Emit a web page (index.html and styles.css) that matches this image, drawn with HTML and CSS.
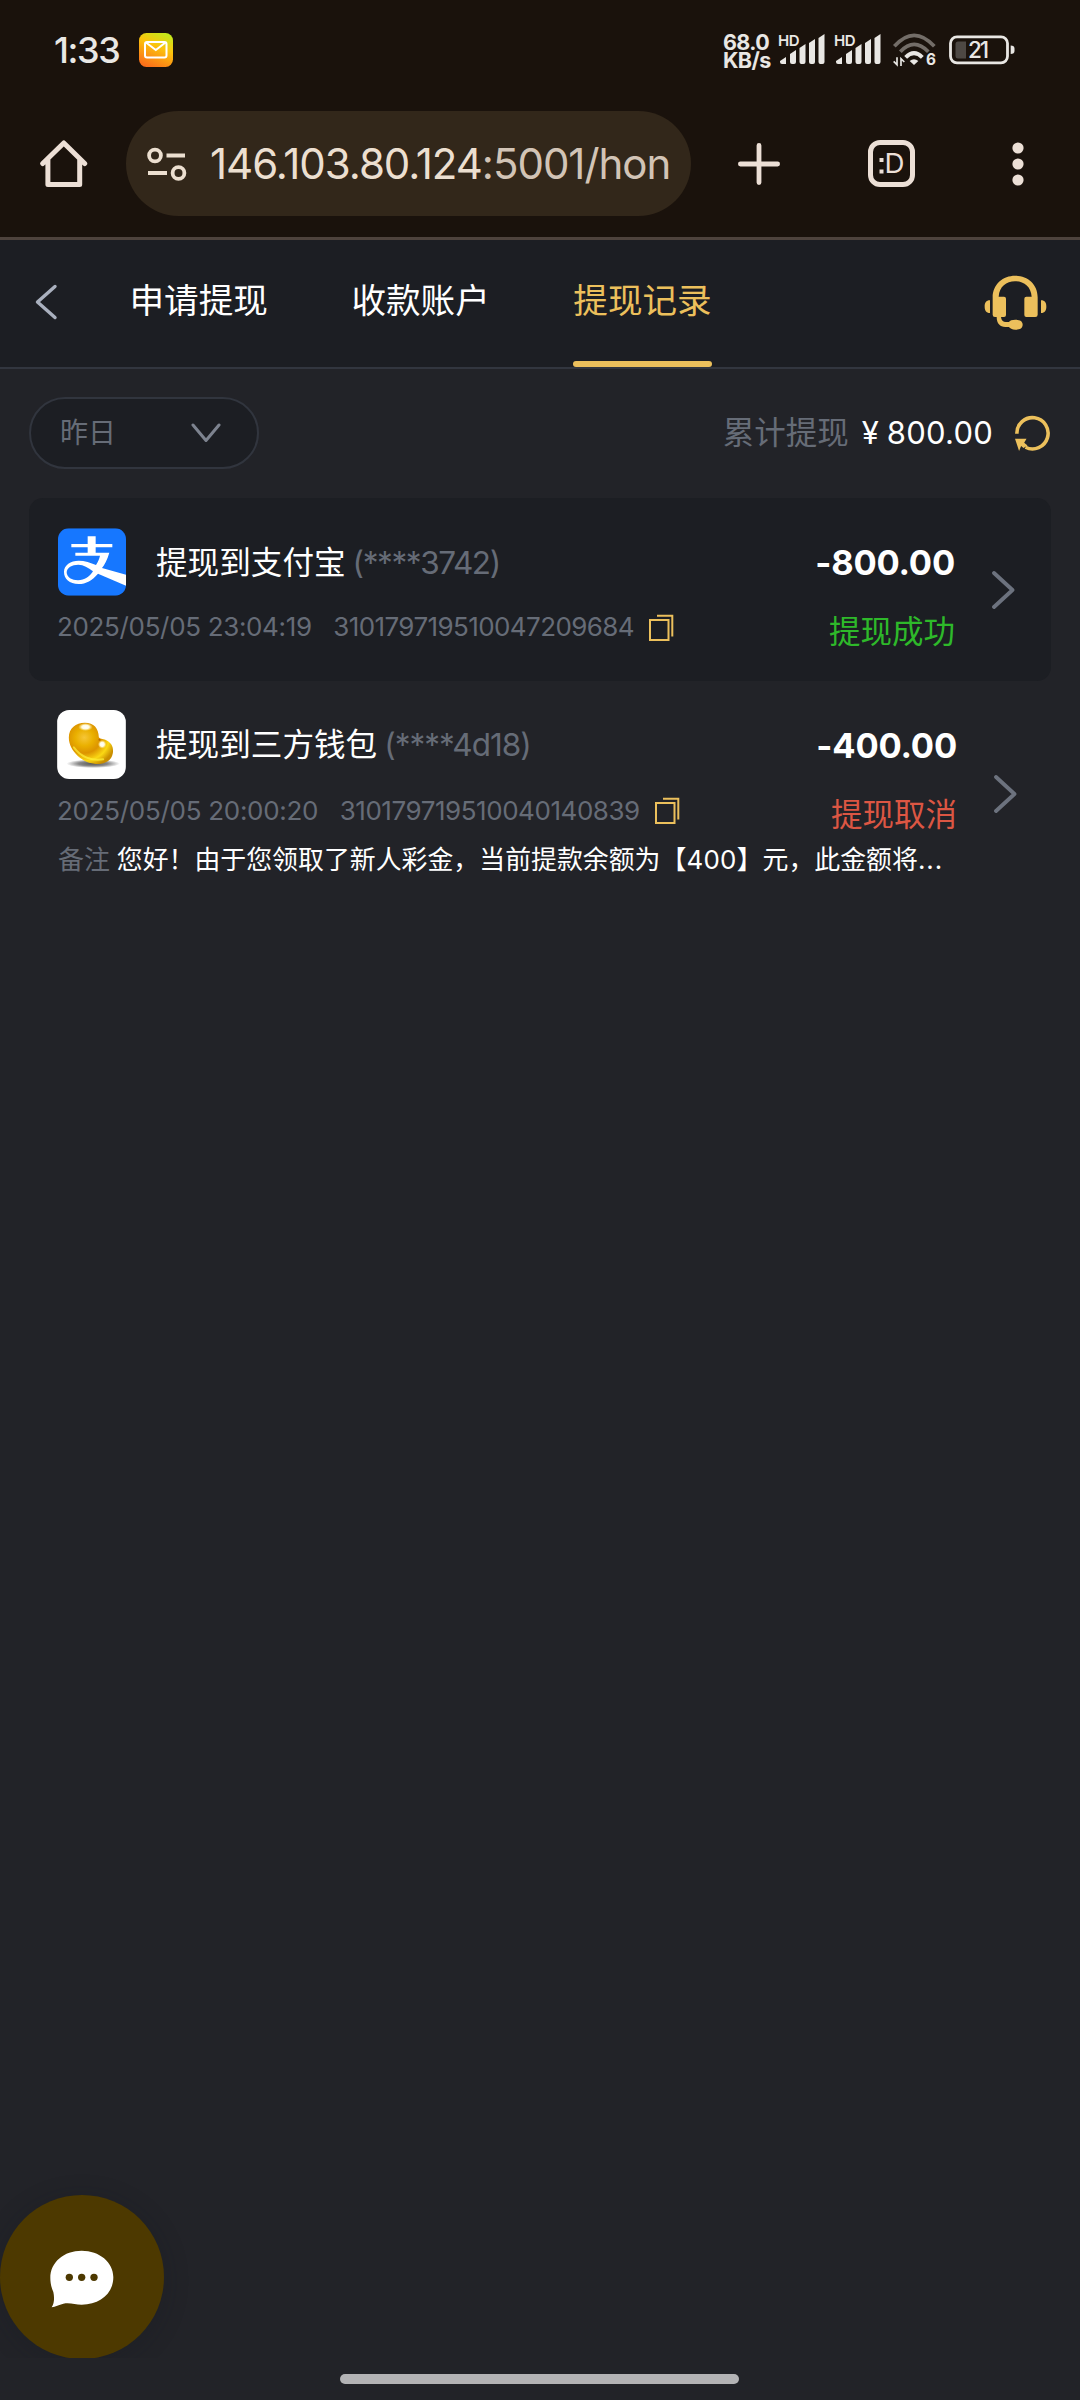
FILE: index.html
```
<!DOCTYPE html>
<html lang="zh-CN">
<head>
<meta charset="utf-8">
<title>提现记录</title>
<link rel="stylesheet" href="styles.css">
</head>
<body>
<div class="screen">
  <div class="statusbar">
    <span class="clock">1:33</span>
    <svg class="mail" width="34" height="34" viewBox="0 0 34 34">
      <defs><linearGradient id="mailbg" x1=".75" y1="0" x2=".3" y2="1"><stop offset="0" stop-color="#c4ea1c"/><stop offset=".4" stop-color="#fcc30c"/><stop offset="1" stop-color="#fb6f1a"/></linearGradient></defs>
      <rect width="34" height="34" rx="7.500" fill="url(#mailbg)"/>
      <rect x="6" y="9" width="21.500" height="15.500" rx="2" fill="none" stroke="#fff" stroke-width="2"/>
      <path d="M7 9.500 L16.800 17 L26.500 9.500" fill="none" stroke="#fff" stroke-width="2"/>
    </svg>
    <div class="indicators">
      <div class="speed"><span>68.0</span><span>KB/s</span></div>
      <svg class="signal" width="48" height="36" viewBox="0 -2 48 36">
        <text x="0" y="13" font-size="15" font-weight="600" textLength="21.500" fill="#e9e7e4">HD</text>
        <path fill="#e9e7e4" d="M2 28l6-4v7H4q-2 0-2-2zM12 21l6-4v12q0 2-2 2h-2q-2 0-2-2zM21.500 15l6-4v18q0 2-2 2h-2q-2 0-2-2zM31 10l6-4v23q0 2-2 2h-2q-2 0-2-2zM40.500 5l6-4v28q0 2-2 2h-2q-2 0-2-2z"/>
      </svg>
      <svg class="signal" width="48" height="36" viewBox="0 -2 48 36">
        <text x="0" y="13" font-size="15" font-weight="600" textLength="21.500" fill="#e9e7e4">HD</text>
        <path fill="#e9e7e4" d="M2 28l6-4v7H4q-2 0-2-2zM12 21l6-4v12q0 2-2 2h-2q-2 0-2-2zM21.500 15l6-4v18q0 2-2 2h-2q-2 0-2-2zM31 10l6-4v23q0 2-2 2h-2q-2 0-2-2zM40.500 5l6-4v28q0 2-2 2h-2q-2 0-2-2z"/>
      </svg>
      <svg class="wifi" width="46" height="38" viewBox="0 0 138 114">
        <g fill="none" stroke-width="11" transform="translate(-32 -25)">
          <path stroke="#736d68" d="M39 65Q98 -1 159 65M57 81Q98 37 141 81"/>
          <path stroke="#e9e7e4" stroke-width="12" d="M73 98Q98 73 123 98"/>
          <path stroke="#e9e7e4" stroke-width="5" d="M47 98v22l-10-10M59 124v-22l10 10"/>
          <path fill="#e9e7e4" d="M85 109Q98 98 111 109L98 121Z"/>
        </g>
        <text x="102" y="97" font-size="46" font-weight="700" fill="#e9e7e4">6</text>
      </svg>
      <svg class="battery" width="67" height="30" viewBox="0 0 67 30">
        <rect x="1.500" y="1.800" width="57" height="26" rx="6.500" fill="none" stroke="#e9e7e4" stroke-width="2.800"/>
        <path fill="#4d4844" d="M9 6.500h8v17H9q-2.500 0-2.500-2.500V9q0-2.500 2.500-2.500z"/>
        <path fill="#e9e7e4" d="M61.700 10.500q3.800 0 3.800 3v2.500q0 3-3.800 3z"/>
        <text x="19" y="23" font-size="22.500" font-weight="500" textLength="21" fill="#e9e7e4">21</text>
      </svg>
    </div>
  </div>

  <div class="browserbar">
    <svg class="home" width="48" height="48" viewBox="0 0 48 48" fill="none" stroke="#ecdfd6" stroke-width="5" stroke-linecap="round" stroke-linejoin="round">
      <path d="M2.700 23.500L23.800 3L44.700 23.500M7.900 19.500V44.500H39.700V19.500"/>
    </svg>
    <div class="omnibox">
      <svg width="40" height="34" viewBox="0 0 40 34" fill="none" stroke="#ecdfd0" stroke-width="3.800">
        <circle cx="8" cy="8.500" r="5.900"/><path d="M19.500 8.500H38M1 26H20"/><circle cx="31.500" cy="26" r="5.900"/>
      </svg>
      <span class="url">146.103.80.124<span class="path">:5001/hon</span></span>
    </div>
    <svg class="plus" width="44" height="44" viewBox="0 0 44 44" stroke="#ecdfd6" stroke-width="4.800" stroke-linecap="round"><path d="M22 3.400V40.600M3.400 22H40.600"/></svg>
    <svg class="tabcount" width="48" height="48" viewBox="0 0 48 48">
      <rect x="2.500" y="2.500" width="42" height="42" rx="9.500" fill="none" stroke="#ecdfd6" stroke-width="5"/>
      <path fill="#ecdfd6" d="M11.500 18h4v4h-4zM11.500 29.500h4v4h-4z"/>
      <text x="16.600" y="33.300" font-size="27" fill="#ecdfd6" textLength="20" lengthAdjust="spacingAndGlyphs">D</text>
    </svg>
    <svg class="more" width="12" height="44" viewBox="0 0 12 44" fill="#ecdfd6"><circle cx="6" cy="6" r="5.600"/><circle cx="6" cy="22" r="5.600"/><circle cx="6" cy="38" r="5.600"/></svg>
  </div>

  <header class="topnav">
    <svg class="back" width="24" height="36" viewBox="0 0 24 36" fill="none" stroke="#a9b0be" stroke-width="3.400" stroke-linecap="round" stroke-linejoin="round"><path d="M20 2.500L2.500 18L20 33.500"/></svg>
    <nav class="tabs">
      <span class="tab">申请提现</span>
      <span class="tab">收款账户</span>
      <span class="tab active">提现记录</span>
    </nav>
    <svg class="support" width="64" height="56" viewBox="10 15 192 168" fill="#ecc05c">
      <path d="M36 82C36 42 68 17 103 17C140 17 171 42 171 82V134Q171 141 164 141H137Q131 141 131 135V86Q131 80 137 80H153C151 50 130 34 103 34C77 34 56 50 54 80H70Q76 80 76 86V135Q76 141 70 141H61C62 151 67 156 76 156H85C88 151 94 149 104 149C118 149 126 154 126 164C126 174 118 179 104 179C94 179 88 175 85 171H74C58 171 48 160 48 141H43Q36 141 36 134Z"/>
      <path d="M28 91V129C16 129 12 121 12 110S16 91 28 91ZM181 91V129C193 129 197 121 197 110S193 91 181 91Z"/>
    </svg>
  </header>

  <main class="content">
    <section class="filters">
      <div class="select">
        <span>昨日</span>
        <svg width="30" height="20" viewBox="0 0 30 20" fill="none" stroke="#7d838f" stroke-width="3" stroke-linecap="round" stroke-linejoin="round"><path d="M2 2L15 17.500L28 2"/></svg>
      </div>
      <div class="total">
        <span class="label">累计提现</span>
        <span class="yen">¥</span>
        <span class="sum">800.00</span>
        <svg width="36" height="36" viewBox="107 437 106 106"><path d="M112.500 492A46 46 0 1 1 138 532" fill="none" stroke="#ecc05c" stroke-width="10.500"/><path fill="#ecc05c" d="M107 507H141L134 519L144 527L132 534L125 528L119 543Z"/></svg>
      </div>
    </section>

    <section class="records">
      <article class="record striped">
        <div class="title">
          <svg class="logo" width="68" height="68" viewBox="24 24 204 202">
            <defs><clipPath id="tile"><rect x="24" y="24" width="204" height="202" rx="32"/></clipPath></defs>
            <g clip-path="url(#tile)"><path fill="#1677ff" d="M24 24h204v202H24z"/>
            <path fill="#fff" d="M64 71H113V48H137V71H187V81H137V97H178C172 118 163 134 156 143L228 163V196L144 160C127 180 108 191 86 191C58 191 42 175 42 155C42 134 62 121 86 121C104 121 122 127 138 134C143 126 148 116 150 106H76V97H113V81H64Z"/>
            <path fill="#1677ff" d="M129 153C114 142 101 133 85 133C66 133 50 142 50 156C50 171 66 180 84 180C104 180 118 169 129 153Z"/></g>
          </svg>
          <span class="name">提现到支付宝</span><span class="acct acct-a">(****3742)</span>
        </div>
        <div class="amount">-800.00</div>
        <div class="meta">
          <span class="date">2025/05/05 23:04:19</span><span class="order">310179719510047209684</span>
          <svg width="25" height="27" viewBox="0 0 25 27" fill="none" stroke="#ecc05c" stroke-width="2"><rect x="1" y="6" width="18.500" height="20"/><path d="M8 1.700H23.300V22.500"/></svg>
        </div>
        <div class="status ok">提现成功</div>
        <svg class="chev" width="23" height="38" viewBox="0 0 23 38"><path d="M2 2L20.500 19L2 36"/></svg>
      </article>

      <article class="record noted">
        <div class="title">
          <svg class="logo" width="69" height="69" viewBox="22 570 206 207">
            <defs>
              <radialGradient id="gold" cx=".35" cy=".36" r=".72"><stop offset="0" stop-color="#f6c637"/><stop offset=".28" stop-color="#eab000"/><stop offset=".52" stop-color="#dc9300"/><stop offset=".78" stop-color="#fbd814"/><stop offset="1" stop-color="#c98e00"/></radialGradient>
              <radialGradient id="shade"><stop offset="0" stop-color="#555"/><stop offset=".55" stop-color="#8a8a8a"/><stop offset="1" stop-color="#fff"/></radialGradient>
              <radialGradient id="shine"><stop offset="0" stop-color="#fff"/><stop offset=".5" stop-color="#fffbe0"/><stop offset="1" stop-color="#ffe680" stop-opacity="0"/></radialGradient>
            </defs>
            <rect x="22" y="570" width="206" height="207" rx="36" fill="#fff"/>
            <ellipse cx="130" cy="731" rx="80" ry="13" fill="url(#shade)"/>
            <path fill="url(#gold)" d="M57 653C57 624 78 608 105 608C132 608 146 624 147 652C152 659 162 656 172 662C184 669 192 680 189 700C185 724 163 733 138 732C98 729 57 692 57 653Z"/>
            <path fill="none" stroke="#fff23c" stroke-width="6" stroke-linecap="round" opacity=".7" d="M72 682C92 710 125 724 160 718"/>
            <ellipse cx="107" cy="621" rx="22" ry="12" fill="url(#shine)"/>
            <ellipse cx="157" cy="673" rx="13" ry="13" fill="url(#shine)"/>
            <circle cx="149" cy="659" r="3" fill="#b86a00"/>
          </svg>
          <span class="name">提现到三方钱包</span><span class="acct acct-b">(****4d18)</span>
        </div>
        <div class="amount">-400.00</div>
        <div class="meta">
          <span class="date">2025/05/05 20:00:20</span><span class="order">310179719510040140839</span>
          <svg width="25" height="27" viewBox="0 0 25 27" fill="none" stroke="#ecc05c" stroke-width="2"><rect x="1" y="6" width="18.500" height="20"/><path d="M8 1.700H23.300V22.500"/></svg>
        </div>
        <div class="status cancelled">提现取消</div>
        <div class="note"><span class="label">备注</span><span>您好！由于您领取了新人彩金，当前提款余额为【<span class="num">400</span>】元，此金额将<span class="dots">...</span></span></div>
        <svg class="chev" width="23" height="38" viewBox="0 0 23 38"><path d="M2 2L20.500 19L2 36"/></svg>
      </article>
    </section>
  </main>

  <div class="chat">
    <div class="bubble">
      <svg width="64" height="58" viewBox="0 0 192 174">
        <path fill="#fff" d="M95 2C148 2 190 36 190 82C190 130 150 164 95 164C75 164 60 157 40 161C27 164 16 170 5 172C14 157 13 140 10 126C4 113 1 99 1 84C1 36 42 2 95 2Z"/>
        <g fill="#4d3900"><circle cx="58" cy="82" r="11"/><circle cx="95" cy="82" r="11"/><circle cx="132" cy="82" r="11"/></g>
      </svg>
    </div>
  </div>
  <div class="gesture"></div>
</div>
</body>
</html>
```
FILE: styles.css
```
* { box-sizing: border-box; }
body { margin: 0; background: #222328; }
svg { display: block; flex: none; }

.screen {
  position: relative;
  width: 1080px;
  height: 2400px;
  overflow: hidden;
  background: #222328;
  color: #fff;
  font-family: Inter, "Noto Sans CJK SC", sans-serif;
  white-space: nowrap;
}

/* phone status bar */
.statusbar {
  display: flex;
  align-items: center;
  height: 100px;
  padding: 0 64px 0 54px;
  background: #1a120c;
  color: #e9e7e4;
}
.clock { width: 85px; font-size: 36px; font-weight: 500; letter-spacing: -1.4px; }
.indicators { display: flex; align-items: center; margin-left: auto; }
.speed {
  display: flex;
  flex-direction: column;
  width: 55px;
  padding-top: 2px;
  font-size: 21.500px;
  font-weight: 700;
  line-height: 18.500px;
  letter-spacing: -.6px;
}
.signal { margin: 0 8px 2px 0; }
.wifi { margin: 4px 11px 0 2px; }

/* browser toolbar */
.browserbar {
  display: flex;
  align-items: center;
  height: 140px;
  padding: 0 0 10px 40px;
  background: #1a120c;
  border-bottom: 3px solid #4e433d;
}
.omnibox {
  display: flex;
  align-items: center;
  width: 565px;
  height: 105px;
  margin-left: 38px;
  padding: 0 21px;
  border-radius: 53px;
  background: #32271a;
}
.url {
  width: 460px;
  margin-left: 23px;
  overflow: hidden;
  color: #ecdfd0;
  font-size: 42px;
  line-height: 60px;
  letter-spacing: -1.02px;
}
.path { color: #d2c4b6; }
.plus { margin-left: 46px; }
.tabcount { margin-left: 87px; }
.more { margin-left: 96px; }

/* page header */
.topnav {
  display: flex;
  align-items: center;
  height: 129px;
  padding: 0 32.500px 0 35px;
  background: #1c1e23;
  border-bottom: 2px solid #32363f;
}
.back { margin-top: -4px; }
.tabs { display: flex; gap: 83.600px; height: 100%; margin-left: 70.500px; }
.tab { height: 127px; font-size: 34.600px; line-height: 120px; }
.tab.active { color: #ecc05c; }
.tab.active::after {
  content: "";
  display: block;
  height: 6px;
  margin-top: 1px;
  border-radius: 3px;
  background: #ecc05c;
}
.support { margin: 0 0 2px auto; }

.filters {
  display: flex;
  align-items: center;
  justify-content: space-between;
  padding: 28px 29px 29px 29px;
}
.select {
  display: flex;
  align-items: center;
  justify-content: space-between;
  width: 230px;
  height: 72px;
  padding: 0 36px 0 29px;
  border: 2px solid #31353e;
  border-radius: 36px;
  background: #1c1e23;
  color: #666c77;
  font-size: 28px;
  line-height: 38px;
}
.total { display: flex; align-items: center; line-height: 40px; }
.total .label { color: #666c77; font-size: 31.500px; }
.yen { width: 19px; margin-left: 13px; font-size: 31px; }
.sum { margin: 0 22px 0 6px; font-size: 31px; letter-spacing: .25px; }

/* withdrawal records */
.records { padding: 0 29px; }
.record {
  display: grid;
  grid-template-columns: 1fr auto 23px;
  grid-template-rows: 69px 40px;
  gap: 14.500px 37px;
  padding: 30px 36px 29.500px 29px;
  border-radius: 14px;
}
.record.striped { background: #1c1e23; }
.record.noted { grid-template-rows: 70px 40px 27px; row-gap: 15px; padding: 29px 34px 39px 29px; }
.title { display: flex; align-items: center; font-size: 31.600px; line-height: 40px; }
.striped .logo { margin-top: -2px; }
.noted .logo { margin: -1px 0 0 -1px; }
.name { margin-left: 30px; }
.acct { margin-left: 7px; color: #666c77; font-size: 31.500px; }
.acct-a { letter-spacing: -1.390px; }
.acct-b { letter-spacing: -1px; }
.amount {
  font-size: 34.500px;
  font-weight: 700;
  line-height: 69px;
  letter-spacing: -.2px;
  text-align: right;
}
.noted .amount { line-height: 71px; }
.meta {
  grid-column: 1;
  display: flex;
  align-items: center;
  height: 30px;
  margin-left: -1px;
  color: #666c77;
  font-size: 26px;
}
.meta svg { margin: 2px 0 0 15px; }
.date { letter-spacing: -.34px; }
.order { margin-left: 21.500px; letter-spacing: -.59px; }
.noted .date { letter-spacing: -.29px; }
.noted .order { letter-spacing: -.45px; }
.noted .meta svg { margin-top: 0; }
.status { font-size: 31.500px; line-height: 40px; text-align: right; }
.ok { color: #2eb92a; }
.cancelled { color: #dc5643; }
.chev {
  grid-column: 3;
  grid-row: 1 / -1;
  align-self: center;
  fill: none;
  stroke: #6c727e;
  stroke-width: 3.800px;
  stroke-linecap: round;
  stroke-linejoin: round;
}
.note {
  grid-column: 1 / 3;
  margin-top: -8px;
  font-size: 25.900px;
  line-height: 36px;
}
.note .label { margin-right: 7px; color: #666c77; }
.note .num { letter-spacing: .3px; }
.note .dots { letter-spacing: 1px; }

/* floating chat button */
.chat {
  position: absolute;
  left: 0;
  bottom: 42px;
  width: 210px;
  height: 190px;
  overflow: hidden;
  display: flex;
  align-items: flex-end;
}
.bubble {
  display: flex;
  flex: none;
  justify-content: center;
  width: 164px;
  height: 164px;
  margin-bottom: -1px;
  padding-top: 55px;
  border-radius: 50%;
  background: #4d3900;
  box-shadow: 0 4px 24px rgba(20, 22, 30, .25);
}
.gesture {
  position: absolute;
  left: 340px;
  bottom: 16px;
  width: 399px;
  height: 10px;
  border-radius: 5px;
  background: #b3b3b5;
}
```
